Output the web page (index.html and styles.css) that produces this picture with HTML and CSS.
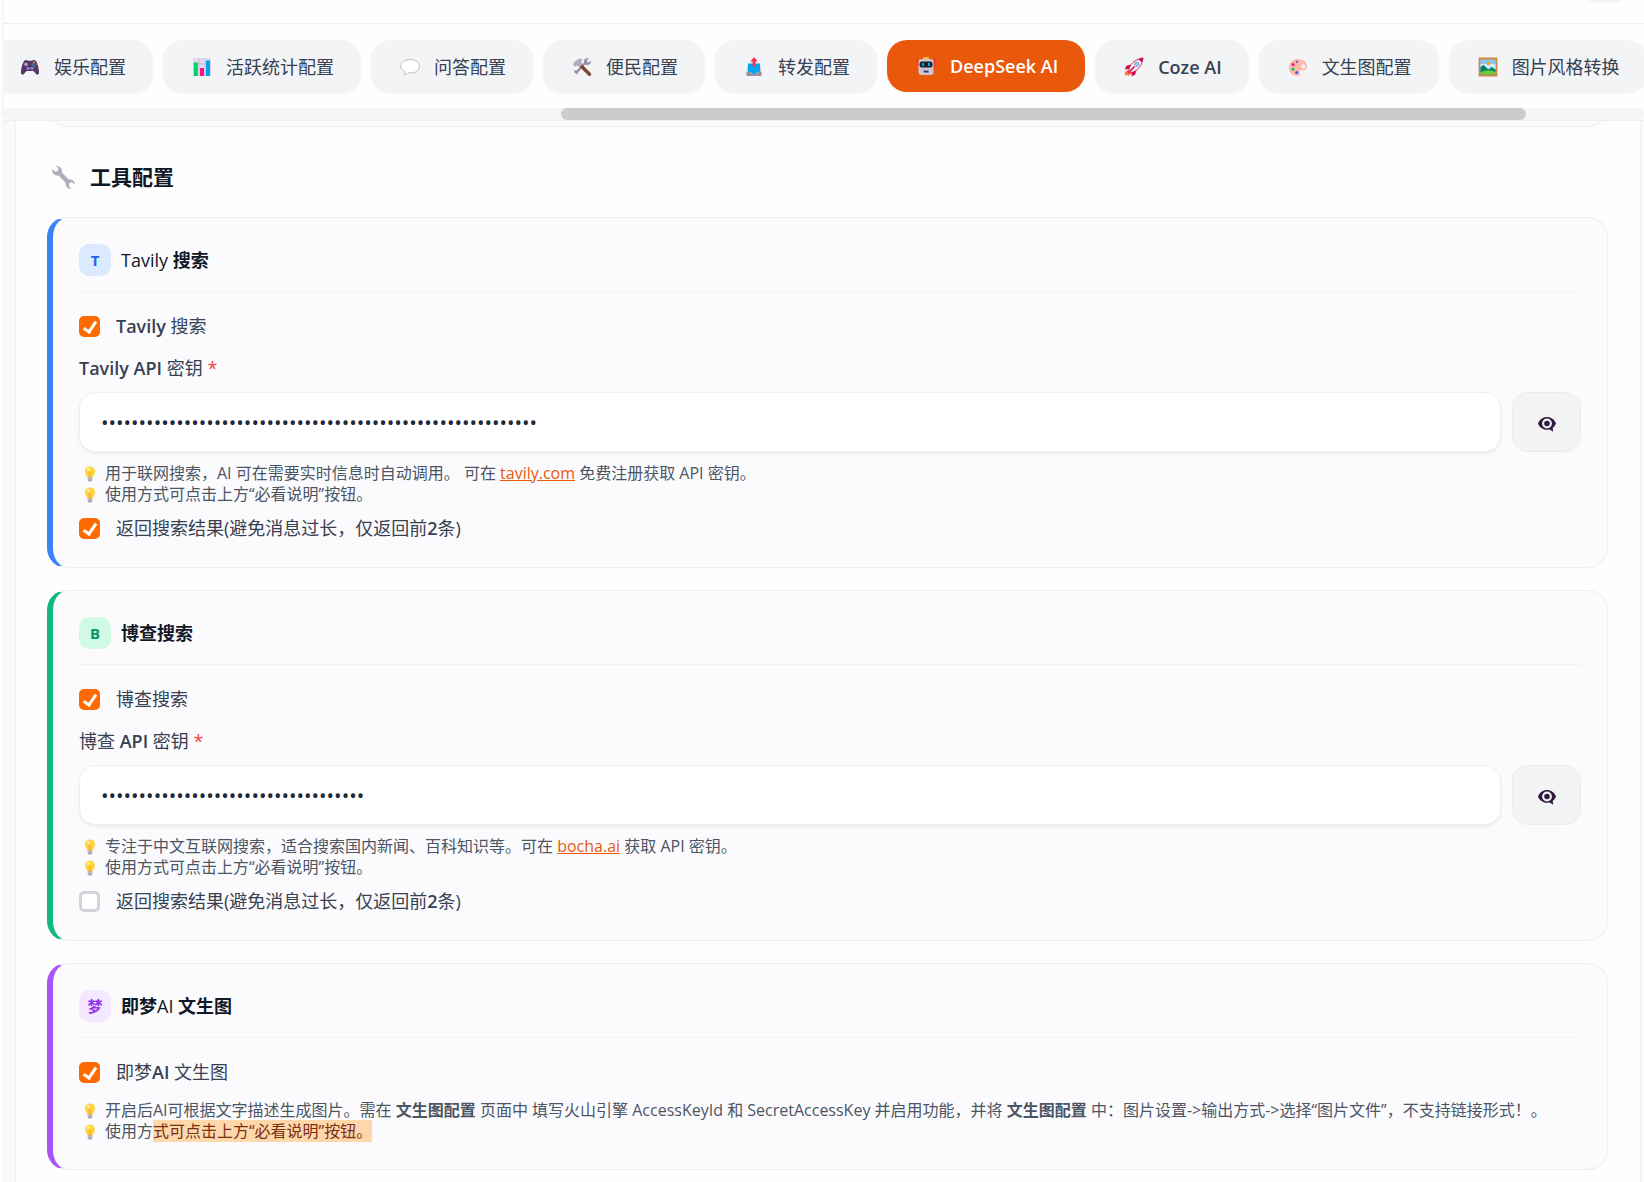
FILE: index.html
```html
<!DOCTYPE html>
<html lang="zh-CN">
<head>
<meta charset="utf-8">
<meta name="viewport" content="width=device-width, initial-scale=1">
<title>工具配置</title>
<link rel="stylesheet" href="styles.css">
</head>
<body>
<svg class="sprite" aria-hidden="true">
  <symbol id="bulb" viewBox="0 0 16 16">
    <path d="M8 .4a5 5 0 0 0-5 5c0 2.400 1.600 3.200 2.200 5.800h5.600C11.400 8.600 13 7.800 13 5.400a5 5 0 0 0-5-5z" fill="#fcd53f"/>
    <path d="M6.300 5.500 7.300 7v4.200h1.400V7l1-1.500" fill="none" stroke="#f9a825" stroke-width=".8"/>
    <circle cx="6.500" cy="3.600" r="1.600" fill="#fff2a0"/>
    <path d="M5.700 11.200h4.600v2.600c0 1-.8 1.800-2.300 1.800s-2.300-.8-2.300-1.800z" fill="#a9a4ad"/>
    <path d="M5.700 12.800h4.600" stroke="#d6d1da" stroke-width=".7"/>
  </symbol>
  <symbol id="eye" viewBox="0 0 20 16">
    <path d="M1 7.500C2.700 3.200 6 1 10 1s7.300 2.200 9 6.500c-.7 1.800-1.800 3.300-3.300 4.400l.5 3.800-3.500-2.300C7.500 14.800 2.900 12.300 1 7.500z" fill="#321b41"/>
    <circle cx="10" cy="7.500" r="4.900" fill="#f3f4f6"/>
    <circle cx="10" cy="7.500" r="2.800" fill="#321b41"/>
  </symbol>
</svg>

<div class="shell">
  <header class="topbar"><button class="topbar-btn" type="button" aria-label="菜单"></button></header>

  <nav class="tabbar" aria-label="配置">
    <div class="tabs">
      <button class="tab" type="button">
        <svg class="tab-icon" viewBox="0 0 20 20"><path d="M4.500 3.500c1.500-1 3-.5 3.500.2h4c.5-.7 2-1.200 3.500-.2 1.700 2 3.500 7.500 3.500 12 0 2.200-2 2.700-3.200 1.200L13.500 14h-7l-2.300 2.700C3 18.200 1 17.700 1 15.500c0-4.500 1.800-10 3.500-12z" fill="#533566"/><circle cx="6" cy="7.300" r="1.700" fill="#b4acdf"/><circle cx="14" cy="5.500" r=".9" fill="#f8c22f"/><circle cx="12.300" cy="7.300" r=".9" fill="#3f8dfb"/><circle cx="15.700" cy="7.300" r=".9" fill="#f03a5f"/><circle cx="14" cy="9" r=".9" fill="#1fc47a"/><circle cx="8" cy="11.300" r="1.500" fill="#9b8ed0"/><circle cx="12" cy="11.300" r="1.500" fill="#9b8ed0"/></svg>
        娱乐配置</button>
      <button class="tab" type="button">
        <svg class="tab-icon" viewBox="0 0 20 20"><path d="M1 1h18v18H1z" fill="#e4d8ee"/><path d="M7 1v18M13 1v18M1 7h18M1 13h18" stroke="#c9bcd6"/><path d="M1.800 5.500h4V19h-4z" fill="#00d26a"/><path d="M8 11h4v8H8z" fill="#f8108a"/><path d="M14 3.500h4V19h-4z" fill="#00a6ed"/></svg>
        活跃统计配置</button>
      <button class="tab" type="button">
        <svg class="tab-icon" viewBox="0 0 20 20"><path d="M10.500 2.500c5 0 9 2.800 9 6.700 0 4-4 6.800-9 6.800-1 0-1.800-.1-2.500-.3-.9 1.200-2.300 2-4.200 2 .9-.8 1.100-2 .7-3.200C2 13.300.7 11.500.7 9.200c0-3.900 4.800-6.700 9.800-6.700z" fill="#fff" stroke="#b8b8bc" stroke-width=".9"/></svg>
        问答配置</button>
      <button class="tab" type="button">
        <svg class="tab-icon" viewBox="0 0 20 20"><path d="m4 16 9.500-10.500" stroke="#998ea4" stroke-width="2.400"/><path d="M2 13.800c1-.8 2.400-.7 3.300.2s1 2.300.2 3.300L4.300 16l-1.600.3z M12 3.500C13 1.300 15.200.8 17 1.400l-2 2.200.4 1.600 1.600.4 2-2c.3 2-.6 4-3 4.500-2 .4-4.500-1.500-4-4.600z" fill="#998ea4"/><path d="m8.500 8.300 9 9" stroke="#7d4533" stroke-width="3.400" stroke-linecap="round"/><path d="M.8 7.300 3 4.200 7.500 1.500l3.300 1-1.500 1.800.9 3.200-2.700 2.700-2.800-1.800-1.600 1.300z" fill="#b4acbc"/></svg>
        便民配置</button>
      <button class="tab" type="button">
        <svg class="tab-icon" viewBox="0 0 20 20"><path d="M4 7h12l1.500 7v4a1 1 0 0 1-1 1h-13a1 1 0 0 1-1-1v-4z" fill="#cdc4d6"/><path d="M2.500 15h3.700l1.300 2h5l1.300-2h3.700v3.500l-.6.500H3.100l-.6-.5z" fill="#998f9f"/><path d="M4 6.500h12v8l-2.500.5L11 17H9l-2.500-2L4 14.500z" fill="#00a6ed"/><path d="M10 0 6.300 4.500h2.200v5h3v-5h2.200z" fill="#f8315f"/></svg>
        转发配置</button>
      <button class="tab tab-active" type="button" aria-current="page">
        <svg class="tab-icon" viewBox="0 0 20 20"><path d="M1.300 2v8M18.700 2v8" stroke="#f8312f" stroke-width="1.300"/><path d="M7 1h6v3H7z" fill="#fcb72b"/><rect x="2.500" y="3" width="15" height="16" rx="3" fill="#cdc4d6"/><rect x="3.500" y="5.500" width="13" height="6" rx="2.500" fill="#212121"/><path d="M6 7h2v3H6zM12 7h2v3h-2z" fill="#00a6ed"/><path d="M7.500 14.500h5v2h-5z" fill="#433b6b"/></svg>
        DeepSeek AI</button>
      <button class="tab" type="button">
        <svg class="tab-icon" viewBox="0 0 20 20"><path d="m5 13.500-4 1.200L.7 19l2.200-1.200L4 19l4-2.500z" fill="#ff822d"/><path d="m7 7.500-4.500 1.200L.8 12.500 5.500 12zM12.500 13l-1.300 4.500-3.500 2 .3-4.800z" fill="#ca0b4a"/><path d="M5 12.500c.6-4.500 5-10 14-11.700C18.500 8.500 13 14.500 7.500 15.500z" fill="#f1ecf4" stroke="#ca0b4a" stroke-width=".8"/><path d="M14.300 2c1.500-.7 3-1 4.700-1.200-.1 1.700-.5 3.300-1.200 4.800z" fill="#ca0b4a"/><path d="m4 12.500 4.200 3.800L5 17l-2-2z" fill="#f92f60"/><path d="m6.200 14 4.300-4.500" stroke="#ca0b4a" stroke-width="1.500"/><circle cx="12.800" cy="7.300" r="2.200" fill="#83cbff" stroke="#9b9b9b" stroke-width=".8"/></svg>
        <span class="latin">Coze AI</span></button>
      <button class="tab" type="button">
        <svg class="tab-icon" viewBox="0 0 20 20"><path fill-rule="evenodd" d="M10 2C4.500 2 1 5.500 1 10.500S4.500 19 9 19c2.700 0 3.200-1.700 2.600-3.200-.6-1.700.6-2.800 2.400-2.500 3 .5 5-1 5-3.500C19 5 15.500 2 10 2zm5.300 5.300a2.100 2.100 0 1 1 0 4.200 2.100 2.100 0 0 1 0-4.200z" fill="#ffb8a8"/><circle cx="5" cy="7.500" r="1.500" fill="#f70a8d"/><circle cx="9" cy="4.800" r="1.400" fill="#8d65c5"/><circle cx="5" cy="12.300" r="1.500" fill="#00c763"/><circle cx="8.700" cy="15.600" r="1.500" fill="#3f5ffb"/></svg>
        文生图配置</button>
      <button class="tab" type="button">
        <svg class="tab-icon" viewBox="0 0 20 20"><path d="M1.500 1.500h17v17h-17z" fill="#83cbff" stroke="#d3883e" stroke-width="1.800"/><path d="M2.500 7h15v5h-15z" fill="#cfe9ff"/><circle cx="10.500" cy="6.300" r="2" fill="#ff9d1f"/><path d="m2.500 10 3-2 5 4.500 3-2.500 4 2.500v5h-15z" fill="#008463"/><path d="M2.500 15.500c5-2.500 10-2.500 15-.5v2.500h-15z" fill="#7bc83b"/></svg>
        图片风格转换</button>
    </div>
    <div class="scroll-track"><div class="scroll-thumb"></div></div>
  </nav>

  <div class="stage">
    <main class="panel">
      <div class="previous-card"></div>
      <h2 class="section-title">
        <svg class="section-icon" viewBox="0 0 26 26"><path d="M1 4.500 4.500 7l2.800-.8L7.500 3 5 1C8.800.5 12 3.300 11.300 7.800l7.200 7.400c3.300-.8 6.300 1.600 6.500 5.300L21.700 18l-2.600.8-.4 3 2.500 3c-4 .2-6.600-2.800-6-6.300L7.800 11C4.200 11.800.9 8.900 1 4.500z" fill="#b4acbc"/></svg>
        工具配置</h2>

      <section class="card card-blue">
        <h3 class="card-head"><span class="badge">T</span><span><span class="light">Tavily</span> 搜索</span></h3>
        <label class="check"><input type="checkbox" checked><span><span class="latin">Tavily</span> 搜索</span></label>
        <label class="field-label" for="tavily-key"><span class="latin">Tavily API</span> 密钥 <span class="required">*</span></label>
        <div class="key-row">
          <input class="key-input" id="tavily-key" type="password" value="0000000000000000000000000000000000000000000000000000000000">
          <button class="eye-btn" type="button" aria-label="显示密钥"><svg class="eye-icon"><use href="#eye"/></svg></button>
        </div>
        <div class="hints">
          <p><svg class="bulb"><use href="#bulb"/></svg>用于联网搜索，AI 可在需要实时信息时自动调用。 可在 <a href="#tavily">tavily.com</a> 免费注册获取 API 密钥。</p>
          <p><svg class="bulb"><use href="#bulb"/></svg>使用方式可点击上方“必看说明”按钮。</p>
        </div>
        <label class="check check-after"><input type="checkbox" checked><span>返回搜索结果(避免消息过长，仅返回前<span class="latin">2</span>条)</span></label>
      </section>

      <section class="card card-green">
        <h3 class="card-head"><span class="badge">B</span>博查搜索</h3>
        <label class="check"><input type="checkbox" checked>博查搜索</label>
        <label class="field-label" for="bocha-key">博查 <span class="latin">API</span> 密钥 <span class="required">*</span></label>
        <div class="key-row">
          <input class="key-input" id="bocha-key" type="password" value="00000000000000000000000000000000000">
          <button class="eye-btn" type="button" aria-label="显示密钥"><svg class="eye-icon"><use href="#eye"/></svg></button>
        </div>
        <div class="hints">
          <p><svg class="bulb"><use href="#bulb"/></svg>专注于中文互联网搜索，适合搜索国内新闻、百科知识等。可在 <a href="#bocha">bocha.ai</a> 获取 API 密钥。</p>
          <p><svg class="bulb"><use href="#bulb"/></svg>使用方式可点击上方“必看说明”按钮。</p>
        </div>
        <label class="check check-after"><input type="checkbox"><span>返回搜索结果(避免消息过长，仅返回前<span class="latin">2</span>条)</span></label>
      </section>

      <section class="card card-purple">
        <h3 class="card-head"><span class="badge">梦</span><span>即梦<span class="light">AI</span> 文生图</span></h3>
        <label class="check"><input type="checkbox" checked><span>即梦<span class="latin">AI</span> 文生图</span></label>
        <div class="hints hints-spaced">
          <p><svg class="bulb"><use href="#bulb"/></svg>开启后AI可根据文字描述生成图片。需在 <strong>文生图配置</strong> 页面中 填写火山引擎 AccessKeyId 和 SecretAccessKey 并启用功能，并将 <strong>文生图配置</strong> 中：图片设置-&gt;输出方式-&gt;选择“图片文件”，不支持链接形式！。</p>
          <p><svg class="bulb"><use href="#bulb"/></svg>使用方<mark>式可点击上方“必看说明”按钮。</mark></p>
        </div>
      </section>
    </main>
  </div>
</div>
</body>
</html>
```
FILE: styles.css
```css
* { box-sizing: border-box; }

body {
  margin: 0;
  background: #fdfdfe;
  color: #374151;
  font: 18px/24px "Open Sans", "Noto Sans CJK SC", sans-serif;
}

.sprite { position: absolute; width: 0; height: 0; }

.latin { font-weight: 600; }

.shell {
  height: 100vh;
  margin-left: 3px;
  border-left: 1px solid #eeeff1;
  display: flex;
  flex-direction: column;
  overflow: hidden;
}

.topbar {
  flex: none;
  height: 24px;
  padding: 0 15px 20px 0;
  display: flex;
  justify-content: flex-end;
  align-items: flex-end;
  overflow: hidden;
  border-bottom: 1px solid #eeeeef;
  background: #fefefe;
}
.topbar-btn {
  flex: none;
  width: 48px;
  height: 48px;
  border: 0;
  border-radius: 16px;
  background: #f3f4f6;
}

.tabbar {
  flex: none;
  padding-top: 16px;
  overflow: hidden;
  background: #fefefe;
  border-bottom: 1px solid #eeeeef;
}
.tabs {
  display: flex;
  gap: 10px;
  margin: 0 0 15px -13px;
}
.tab {
  flex: none;
  display: flex;
  align-items: center;
  gap: 12px;
  height: 53px;
  padding: 0 27px;
  border: 0;
  border-radius: 20px;
  background: #f3f4f6;
  box-shadow: 0 1px 3px rgba(0, 0, 0, .04);
  color: #374151;
  font: 18px/24px "Open Sans", "Noto Sans CJK SC", sans-serif;
  white-space: nowrap;
}
.tab-active {
  height: 52px;
  background: #ea580c;
  color: #fff;
  font-weight: 600;
}
.tab-icon { width: 24px; height: 20px; }

.scroll-track {
  display: grid;
  grid-template-columns: 557fr 965fr 118fr;
  height: 12px;
  border-radius: 6px;
  background: #f5f5f5;
}
.scroll-thumb {
  grid-column: 2;
  border-radius: 6px;
  background: #cbcccb;
}

.stage {
  flex: 1;
  min-height: 0;
  padding: 0 3px 0 11px;
  overflow: hidden;
  background: #f9fafc;
}
.panel {
  display: flow-root;
  min-height: 100%;
  padding: 0 32px 40px 31px;
  border: 1px solid #f0f1f4;
  border-width: 0 1px;
  background: #fefefe;
}
.previous-card {
  height: 60px;
  margin-top: -54px;
  border: 1px solid #ebedf0;
  border-radius: 20px;
  background: #fcfcfe;
}

.section-title {
  display: flex;
  align-items: center;
  gap: 14px;
  margin: 34px 0 24px;
  padding-left: 4px;
  color: #111827;
  font-size: 21px;
  line-height: 32px;
}
.section-icon { width: 25px; height: 25px; }

.card {
  margin-bottom: 22px;
  padding: 26px 26px 27px;
  border: 1px solid #eeeff2;
  border-left: 6px solid;
  border-radius: 20px;
  background: #fbfbfe;
}
.card-blue { border-left-color: #3b82f6; }
.card-green { border-left-color: #10b981; }
.card-purple { border-left-color: #a855f7; }

.card-head {
  display: flex;
  align-items: center;
  gap: 10px;
  margin: 0 0 22px;
  padding-bottom: 15px;
  border-bottom: 1px solid #f1f2f4;
  color: #111827;
  font-size: 18px;
  font-weight: 600;
  line-height: 32px;
}
.light { font-weight: 400; }
.badge {
  width: 32px;
  height: 32px;
  border-radius: 10px;
  font-size: 15px;
  font-weight: 700;
  text-align: center;
}
.card-blue .badge { background: #dbeafe; color: #2563eb; }
.card-green .badge { background: #d1fae5; color: #059669; }
.card-purple .badge { background: #f3e8ff; color: #9333ea; }

.check {
  display: flex;
  align-items: center;
  gap: 16px;
}
.check-after { margin-top: 11px; }
.check input {
  display: grid;
  place-items: center;
  width: 21px;
  height: 21px;
  margin: 0;
  appearance: none;
  border: 3px solid #d1d5db;
  border-radius: 5px;
  background: #fff;
}
.check input:checked { border-color: #ff6a00; background: #ff6a00; }
.check input:checked::after {
  content: "";
  box-sizing: border-box;
  width: 8px;
  height: 14px;
  margin-bottom: 2px;
  border: solid #fff;
  border-width: 0 3px 3px 0;
  transform: rotate(34deg);
}

.field-label {
  display: block;
  margin: 18px 0 12px;
}
.required { color: #ef4444; }

.key-row { display: flex; gap: 11px; }
.key-input {
  flex: 1;
  min-width: 0;
  height: 60px;
  padding: 0 21px;
  border: 1px solid #eeeff1;
  border-radius: 16px;
  background: #fff;
  box-shadow: 0 2px 3px rgba(0, 0, 0, .06);
  color: #1f2937;
  font: 20px/24px "Open Sans", sans-serif;
}
.eye-btn {
  display: grid;
  place-items: center;
  width: 69px;
  height: 60px;
  padding: 4px 0 0;
  border: 1px solid #eaecef;
  border-radius: 16px;
  background: #f3f4f6;
}
.eye-icon { width: 20px; height: 16px; }

.hints {
  margin-top: 11px;
  color: #4b5563;
  font-size: 16px;
  line-height: 21px;
}
.hints-spaced { margin-top: 16px; }
.hints p {
  margin: 0;
  white-space: nowrap;
}
.hints a { color: #ea580c; }
.bulb {
  width: 16px;
  height: 16px;
  margin: 0 7px 0 3px;
  vertical-align: -3px;
}
mark { background: #fed7aa; color: #7c2d12; }
```
